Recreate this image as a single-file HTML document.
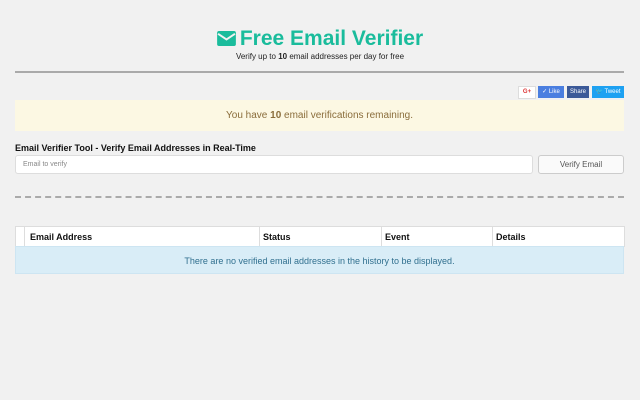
<!DOCTYPE html><html><head><style>
body{margin:0;width:640px;height:400px;background:#f1f1f1;font-family:"Liberation Sans",sans-serif;position:relative;overflow:hidden}
.a{position:absolute}
</style></head><body>
<div class="a" style="left:0;width:640px;top:27px;text-align:center;color:#1abc9c;font-weight:bold;font-size:21px">
<svg width="19" height="15" viewBox="0 0 20 16" style="vertical-align:-1px;margin-right:4px"><rect width="20" height="16" rx="2" fill="#1abc9c"/><path d="M1 3 L10 9 L19 3" stroke="#f1f1f1" stroke-width="2" fill="none"/></svg>Free Email Verifier</div>
<div class="a" style="left:0;width:640px;top:52px;text-align:center;font-size:8px;color:#222">Verify up to <b>10</b> email addresses per day for free</div>
<div class="a" style="left:15px;width:609px;top:71px;height:2px;background:#aaa"></div>
<div class="a" style="left:518px;top:86px;width:16px;height:11px;background:#fff;border:1px solid #ddd;color:#d33;font-size:6px;text-align:center;line-height:11px;font-weight:bold">G+</div>
<div class="a" style="left:538px;top:86px;width:26px;height:12px;background:#4a7ee0;color:#fff;font-size:6px;line-height:12px;text-align:center">✓ Like</div>
<div class="a" style="left:567px;top:86px;width:22px;height:12px;background:#3b5998;color:#fff;font-size:6px;line-height:12px;text-align:center">Share</div>
<div class="a" style="left:592px;top:86px;width:32px;height:12px;background:#1da1f2;color:#fff;font-size:6px;line-height:12px;text-align:center">🐦 Tweet</div>
<div class="a" style="left:15px;width:609px;top:100px;height:31px;background:#fcf8e3;color:#8a6d3b;font-size:10px;line-height:31px;text-align:center">You have <b>10</b> email verifications remaining.</div>
<div class="a" style="left:15px;top:143px;font-size:9px;font-weight:bold;color:#111">Email Verifier Tool - Verify Email Addresses in Real-Time</div>
<div class="a" style="left:15px;top:155px;width:509px;height:17px;background:#fff;border:1px solid #ddd;border-radius:3px;font-size:7px;color:#888;line-height:17px;padding-left:7px">Email to verify</div>
<div class="a" style="left:538px;top:155px;width:84px;height:17px;background:#fafafa;border:1px solid #ccc;border-radius:3px;font-size:8px;color:#555;line-height:17px;text-align:center">Verify Email</div>
<div class="a" style="left:15px;width:609px;top:196px;border-top:2px dashed #aaa"></div>
<div class="a" style="left:15px;width:608px;top:226px;height:19px;background:#fff;border:1px solid #ddd;font-size:9px;font-weight:bold;color:#111;line-height:20px">
<span class="a" style="left:8px;top:0;bottom:0;border-left:1px solid #ddd"></span>
<span class="a" style="left:14px">Email Address</span>
<span class="a" style="left:243px;top:0;bottom:0;border-left:1px solid #ddd"></span><span class="a" style="left:247px">Status</span>
<span class="a" style="left:365px;top:0;bottom:0;border-left:1px solid #ddd"></span><span class="a" style="left:369px">Event</span>
<span class="a" style="left:476px;top:0;bottom:0;border-left:1px solid #ddd"></span><span class="a" style="left:480px">Details</span></div>
<div class="a" style="left:15px;width:609px;top:246px;height:28px;background:#d9edf7;border:1px solid #cde5f2;box-sizing:border-box;color:#31708f;font-size:9px;line-height:28px;text-align:center">There are no verified email addresses in the history to be displayed.</div>
</body></html>
